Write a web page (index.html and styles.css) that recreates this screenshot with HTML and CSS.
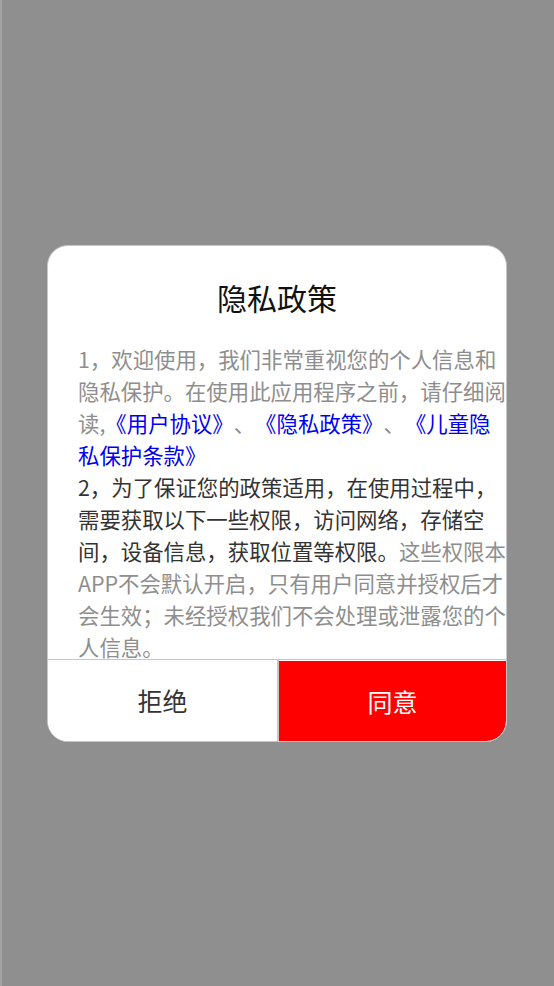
FILE: index.html
```html
<!DOCTYPE html>
<html lang="zh-CN">
<head>
<meta charset="utf-8">
<title>隐私政策</title>
<link rel="stylesheet" href="styles.css">
</head>
<body>
<div class="page">
  <div class="dialog">
    <div class="title">隐私政策</div>
    <div class="body">
      <p class="text"><span class="muted">1，欢迎使用，我们非常重视您的个人信息和隐私保护。在使用此应用程序之前，请仔细阅读,</span><span class="link">《用户协议》</span><span class="muted">、</span><span class="link">《隐私政策》</span><span class="muted">、</span><span class="link">《儿童隐私保护条款》</span><br><span class="dark">2，为了保证您的政策适用，在使用过程中，需要获取以下一些权限，访问网络，存储空间，设备信息，获取位置等权限。</span><span class="muted">这些权限本APP不会默认开启，只有用户同意并授权后才会生效；未经授权我们不会处理或泄露您的个人信息。</span></p>
    </div>
    <div class="actions">
      <div class="btn btn-reject">拒绝</div>
      <div class="btn btn-agree">同意</div>
    </div>
  </div>
</div>
</body>
</html>
```
FILE: styles.css
```css
html, body {
  margin: 0;
  padding: 0;
}
body {
  background: #8f8f8f;
  font-family: "Noto Sans CJK SC", "Noto Sans", sans-serif;
}
.page {
  height: 986px;
  box-sizing: border-box;
  border-left: 2px solid #a2a2a2;
  display: flex;
  align-items: center;
  justify-content: center;
}
.dialog {
  width: 460px;
  height: 497px;
  margin-left: -2px;
  box-sizing: border-box;
  background: #ffffff;
  border: 1px solid #c6c6c6;
  border-radius: 21px;
  overflow: hidden;
  display: flex;
  flex-direction: column;
}
.title {
  padding-top: 21px;
  height: 60px;
  line-height: 60px;
  font-size: 30px;
  color: #111111;
  text-align: center;
}
.body {
  height: 333px;
  box-sizing: border-box;
  padding: 16px 0 0 30px;
  overflow: hidden;
  border-bottom: 1px solid #c6c6c6;
}
.text {
  margin: 0;
  width: 432px;
  font-size: 21.4px;
  line-height: 32.1px;
  text-spacing-trim: space-all;
  font-feature-settings: "halt" 0, "chws" 0;
}
.muted { color: #8e8e8e; }
.dark { color: #333333; }
.link { color: #0000f0; }
.actions {
  flex: 1;
  display: flex;
}
.btn {
  display: flex;
  align-items: center;
  justify-content: center;
  font-size: 25px;
}
.btn-reject {
  width: 229px;
  color: #333333;
  background: #ffffff;
  border-right: 2px solid #c6c6c6;
}
.btn-agree {
  flex: 1;
  color: #ffffff;
  background: #ff0000;
  margin-top: 1px;
  border-bottom-right-radius: 20px;
}
```
